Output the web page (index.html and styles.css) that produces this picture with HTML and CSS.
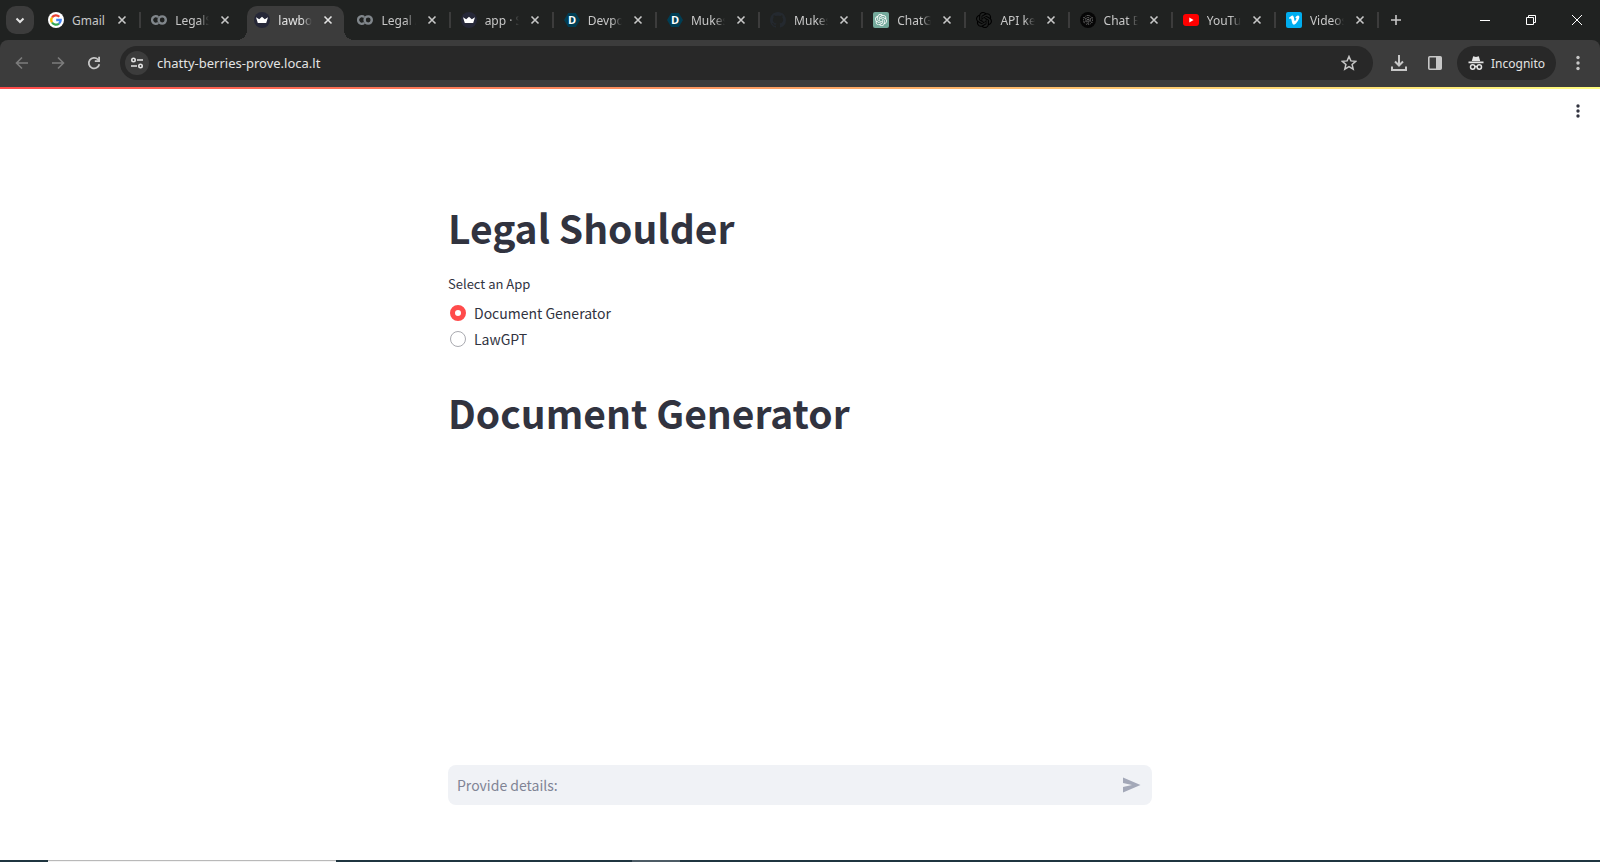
FILE: index.html
```html
<!DOCTYPE html>
<html lang="en">
<head>
  <meta charset="UTF-8">
  <meta name="viewport" content="width=device-width, initial-scale=1.0">
  <title>lawbot</title>
  <link rel="stylesheet" href="styles.css">
</head>
<body>
  <!-- shared icons -->
  <svg class="defs" aria-hidden="true">
    <symbol id="close" viewBox="0 0 16 16"><path d="M4.5 4.5l7 7M11.500 4.500l-7 7" fill="none" stroke="currentColor" stroke-width="1.6"/></symbol>
    <symbol id="colab" viewBox="0 0 16 16"><g fill="none" stroke="#80868b" stroke-width="2.4"><path d="M7.200 5.200A3.700 3.700 0 1 0 7.200 10.800"/><circle cx="11.200" cy="8" r="3.600"/></g></symbol>
    <symbol id="crown" viewBox="0 0 16 16"><circle cx="8" cy="8" r="8" fill="#262838"/><path d="M2 5.200L5.200 7.200 8 4.800 10.800 7.200 14 5.200 12.200 11H3.800z" fill="#fff"/></symbol>
    <symbol id="devpost" viewBox="0 0 16 16"><path d="M4.200 1h7.600L16 8l-4.200 7H4.200L0 8z" fill="#003e54"/><text x="8" y="12" text-anchor="middle" class="devpost-d">D</text></symbol>
    <symbol id="openai" viewBox="0 0 24 24"><path fill="currentColor" d="M22.2819 9.8211a5.9847 5.9847 0 0 0-.5157-4.9108 6.0462 6.0462 0 0 0-6.5098-2.9A6.0651 6.0651 0 0 0 4.9807 4.1818a5.9847 5.9847 0 0 0-3.9977 2.9 6.0462 6.0462 0 0 0 .7427 7.0966 5.98 5.98 0 0 0 .511 4.9107 6.051 6.051 0 0 0 6.5146 2.9001A5.9847 5.9847 0 0 0 13.2599 24a6.0557 6.0557 0 0 0 5.7718-4.2058 5.9894 5.9894 0 0 0 3.9977-2.9001 6.0557 6.0557 0 0 0-.7475-7.0729zm-9.022 12.6081a4.4755 4.4755 0 0 1-2.8764-1.0408l.1419-.0804 4.7783-2.7582a.7948.7948 0 0 0 .3927-.6813v-6.7369l2.02 1.1686a.071.071 0 0 1 .038.052v5.5826a4.504 4.504 0 0 1-4.4945 4.4944zm-9.6607-4.1254a4.4708 4.4708 0 0 1-.5346-3.0137l.142.0852 4.783 2.7582a.7712.7712 0 0 0 .7806 0l5.8428-3.3685v2.3324a.0804.0804 0 0 1-.0332.0615L9.74 19.9502a4.4992 4.4992 0 0 1-6.1408-1.6464zM2.3408 7.8956a4.485 4.485 0 0 1 2.3655-1.9728V11.6a.7664.7664 0 0 0 .3879.6765l5.8144 3.3543-2.0201 1.1685a.0757.0757 0 0 1-.071 0l-4.8303-2.7865A4.504 4.504 0 0 1 2.3408 7.872zm16.5963 3.8558L13.1038 8.364 15.1192 7.2a.0757.0757 0 0 1 .071 0l4.8303 2.7913a4.4944 4.4944 0 0 1-.6765 8.1042v-5.6772a.79.79 0 0 0-.407-.667zm2.0107-3.0231l-.142-.0852-4.7735-2.7818a.7759.7759 0 0 0-.7854 0L9.409 9.2297V6.8974a.0662.0662 0 0 1 .0284-.0615l4.8303-2.7866a4.4992 4.4992 0 0 1 6.6802 4.66zM8.3065 12.863l-2.02-1.1638a.0804.0804 0 0 1-.038-.0567V6.0742a4.4992 4.4992 0 0 1 7.3757-3.4537l-.142.0805L8.704 5.459a.7948.7948 0 0 0-.3927.6813zm1.0976-2.3654l2.602-1.4998 2.6069 1.4998v2.9994l-2.5974 1.4997-2.6067-1.4997Z"/></symbol>
  </svg>

  <header class="browser">
    <div class="tab-strip">
      <button class="tab-search" aria-label="Search tabs">
        <svg class="icon" viewBox="0 0 16 16"><path d="M4.500 6.500L8 10l3.500-3.500" fill="none" stroke="#e3e3e3" stroke-width="2"/></svg>
      </button>
      <div class="tabs" role="tablist">
        <div class="tab" role="tab">
          <svg class="icon" viewBox="0 0 16 16"><circle cx="8" cy="8" r="8" fill="#fff"/><g fill="none" stroke-width="2.300"><path d="M4 5.500A4.700 4.700 0 0 1 11.300 4.700" stroke="#ea4335"/><path d="M4 5.500A4.700 4.700 0 0 0 4 10.500" stroke="#fbbc05"/><path d="M4 10.500A4.700 4.700 0 0 0 11 11.600" stroke="#34a853"/><path d="M11 11.600A4.700 4.700 0 0 0 12.700 8H8.200" stroke="#4285f4"/></g></svg>
          <span class="tab-title">Gmail</span>
          <button class="tab-close" aria-label="Close tab"><svg class="icon"><use href="#close"/></svg></button>
        </div>
        <div class="tab before-active" role="tab">
          <svg class="icon"><use href="#colab"/></svg>
          <span class="tab-title">LegalS</span>
          <button class="tab-close" aria-label="Close tab"><svg class="icon"><use href="#close"/></svg></button>
        </div>
        <div class="tab active" role="tab" aria-selected="true">
          <svg class="icon"><use href="#crown"/></svg>
          <span class="tab-title">lawbo</span>
          <button class="tab-close" aria-label="Close tab"><svg class="icon"><use href="#close"/></svg></button>
        </div>
        <div class="tab" role="tab">
          <svg class="icon"><use href="#colab"/></svg>
          <span class="tab-title">Legal A</span>
          <button class="tab-close" aria-label="Close tab"><svg class="icon"><use href="#close"/></svg></button>
        </div>
        <div class="tab" role="tab">
          <svg class="icon"><use href="#crown"/></svg>
          <span class="tab-title">app · S</span>
          <button class="tab-close" aria-label="Close tab"><svg class="icon"><use href="#close"/></svg></button>
        </div>
        <div class="tab" role="tab">
          <svg class="icon"><use href="#devpost"/></svg>
          <span class="tab-title">Devpo</span>
          <button class="tab-close" aria-label="Close tab"><svg class="icon"><use href="#close"/></svg></button>
        </div>
        <div class="tab" role="tab">
          <svg class="icon"><use href="#devpost"/></svg>
          <span class="tab-title">Mukes</span>
          <button class="tab-close" aria-label="Close tab"><svg class="icon"><use href="#close"/></svg></button>
        </div>
        <div class="tab" role="tab">
          <svg class="icon" viewBox="0 0 16 16"><path fill="#24292f" d="M8 0C3.580 0 0 3.580 0 8c0 3.540 2.290 6.530 5.470 7.590.4.070.55-.17.55-.38 0-.19-.01-.82-.01-1.490-2.010.37-2.530-.49-2.690-.94-.09-.23-.48-.94-.82-1.130-.28-.15-.68-.52-.01-.53.63-.01 1.080.58 1.230.82.72 1.210 1.870.87 2.330.66.07-.52.28-.87.51-1.070-1.780-.2-3.640-.89-3.640-3.950 0-.87.31-1.590.82-2.150-.08-.2-.36-1.020.08-2.120 0 0 .67-.21 2.200.82.64-.18 1.320-.27 2-.27s1.360.09 2 .27c1.530-1.040 2.200-.82 2.200-.82.44 1.100.16 1.920.08 2.120.51.56.82 1.270.82 2.150 0 3.070-1.870 3.750-3.650 3.950.29.25.54.73.54 1.480 0 1.070-.01 1.930-.01 2.200 0 .21.15.46.55.38A8.010 8.010 0 0 0 16 8c0-4.420-3.580-8-8-8z"/></svg>
          <span class="tab-title">Mukes</span>
          <button class="tab-close" aria-label="Close tab"><svg class="icon"><use href="#close"/></svg></button>
        </div>
        <div class="tab" role="tab">
          <svg class="icon chatgpt" viewBox="0 0 16 16"><rect width="16" height="16" rx="2" fill="#74aa9c"/><use href="#openai" x="2" y="2" width="12" height="12"/></svg>
          <span class="tab-title">ChatG</span>
          <button class="tab-close" aria-label="Close tab"><svg class="icon"><use href="#close"/></svg></button>
        </div>
        <div class="tab" role="tab">
          <svg class="icon openai"><use href="#openai"/></svg>
          <span class="tab-title">API ke</span>
          <button class="tab-close" aria-label="Close tab"><svg class="icon"><use href="#close"/></svg></button>
        </div>
        <div class="tab" role="tab">
          <svg class="icon" viewBox="0 0 16 16"><circle cx="8" cy="8" r="8" fill="#060606"/><g fill="none" stroke="#757575" stroke-dasharray="1 1"><circle cx="8" cy="8" r="4.500"/><circle cx="8" cy="8" r="2.300"/><path d="M8 3v10M3.500 5.500l9 5M12.500 5.500l-9 5"/></g></svg>
          <span class="tab-title">Chat B</span>
          <button class="tab-close" aria-label="Close tab"><svg class="icon"><use href="#close"/></svg></button>
        </div>
        <div class="tab" role="tab">
          <svg class="icon" viewBox="0 0 16 16"><rect y="2" width="16" height="12" rx="3" fill="#f00"/><path d="M6.300 5.500v5L10.600 8z" fill="#fff"/></svg>
          <span class="tab-title">YouTu</span>
          <button class="tab-close" aria-label="Close tab"><svg class="icon"><use href="#close"/></svg></button>
        </div>
        <div class="tab" role="tab">
          <svg class="icon" viewBox="0 0 16 16"><rect width="16" height="16" rx="2" fill="#00adef"/><path d="M3 5.700C4.500 4.400 5.600 3.400 6.400 3.400c2 0 1.500 5.600 2.500 5.600.6 0 1.700-2 1.500-2.700-.2-.5-.7-.4-1.100-.2.500-1.700 1.500-2.700 2.700-2.700 1 0 1.500.7 1.300 2-.4 2.700-3.700 7.200-5.500 7.200-2.100 0-2-6-3-6.200-.3 0-.9.400-1.200.6z" fill="#fff"/></svg>
          <span class="tab-title">Videos</span>
          <button class="tab-close" aria-label="Close tab"><svg class="icon"><use href="#close"/></svg></button>
        </div>
      </div>
      <button class="new-tab" aria-label="New tab">
        <svg class="icon" viewBox="0 0 16 16"><path d="M8 3v10M3 8h10" stroke="#c7c7c7" stroke-width="1.600"/></svg>
      </button>
      <div class="window-buttons">
        <button aria-label="Minimize"><svg class="icon" viewBox="0 0 16 16"><path d="M3 8.500h10" stroke="#fff"/></svg></button>
        <button aria-label="Restore"><svg class="icon" viewBox="0 0 16 16"><path d="M3.500 5.500h7v7h-7zM5.500 5.500v-2h7v7h-2" fill="none" stroke="#fff"/></svg></button>
        <button aria-label="Close"><svg class="icon" viewBox="0 0 16 16"><path d="M3 3l10 10M13 3L3 13" stroke="#fff"/></svg></button>
      </div>
    </div>

    <div class="toolbar">
      <button class="nav-btn disabled" aria-label="Back"><svg class="icon" viewBox="0 0 16 16"><path d="M14 8H3M8 2.500L2.500 8 8 13.500" fill="none" stroke="currentColor" stroke-width="1.600"/></svg></button>
      <button class="nav-btn disabled" aria-label="Forward"><svg class="icon" viewBox="0 0 16 16"><path d="M2 8h11M8 2.500L13.500 8 8 13.500" fill="none" stroke="currentColor" stroke-width="1.600"/></svg></button>
      <button class="nav-btn" aria-label="Reload"><svg class="icon" viewBox="0 0 16 16"><path d="M13.300 9.200A5.300 5.300 0 1 1 12 4.500L13.300 6" fill="none" stroke="currentColor" stroke-width="1.800"/><path d="M14 1.800V7H8.800V5.300h3.400V1.800z" fill="currentColor"/></svg></button>
      <div class="omnibox">
        <button class="site-info" aria-label="View site information"><svg class="icon" viewBox="0 0 16 16"><g fill="none" stroke="#e3e3e3" stroke-width="1.600"><circle cx="4.500" cy="5" r="1.700"/><path d="M8 5h6M2 11h6"/><circle cx="11.500" cy="11" r="1.700"/></g></svg></button>
        <input class="url" type="text" value="chatty-berries-prove.loca.lt" aria-label="Address" spellcheck="false">
        <button class="nav-btn star" aria-label="Bookmark this tab"><svg class="icon" viewBox="0 0 16 16"><path d="M8 1.500l1.900 4.400 4.800.4-3.600 3.200 1.100 4.700L8 11.700l-4.200 2.500 1.100-4.700L1.300 6.300l4.800-.4z" fill="none" stroke="currentColor" stroke-width="1.500"/></svg></button>
      </div>
      <button class="nav-btn" aria-label="Downloads"><svg class="icon" viewBox="0 0 16 16"><path d="M8 0v10M4 6.500l4 4 4-4M1 11.500V15h14v-3.500" fill="none" stroke="currentColor" stroke-width="2"/></svg></button>
      <button class="nav-btn" aria-label="Side panel"><svg class="icon" viewBox="0 0 16 16"><rect x="1.800" y="1.800" width="12.400" height="12.400" rx="1" fill="none" stroke="currentColor" stroke-width="1.600"/><path d="M9 2h5v12H9z" fill="currentColor"/></svg></button>
      <button class="incognito"><svg class="icon" viewBox="0 0 16 16"><path d="M5.200 1.200L8 2l2.800-.8L12.200 6H3.800zM.5 6.500h15v1.700H.5z" fill="#e3e3e3"/><g fill="none" stroke="#e3e3e3" stroke-width="1.500"><circle cx="4.700" cy="12" r="2.200"/><circle cx="11.300" cy="12" r="2.200"/><path d="M6.800 11.500h2.400"/></g></svg>Incognito</button>
      <button class="nav-btn" aria-label="Menu"><svg class="icon" viewBox="0 0 16 16"><g fill="currentColor"><circle cx="8" cy="2.500" r="1.700"/><circle cx="8" cy="8" r="1.700"/><circle cx="8" cy="13.500" r="1.700"/></g></svg></button>
    </div>
  </header>

  <div class="app">
    <div class="decoration"></div>
    <button class="app-menu" aria-label="App menu"><svg class="icon" viewBox="0 0 16 16"><circle cx="8" cy="3" r="1.700"/><circle cx="8" cy="8" r="1.700"/><circle cx="8" cy="13" r="1.700"/></svg></button>

    <main class="block">
      <h1>Legal Shoulder</h1>
      <fieldset class="radio-group">
        <legend>Select an App</legend>
        <label class="radio"><input type="radio" name="app" checked> Document Generator</label>
        <label class="radio"><input type="radio" name="app"> LawGPT</label>
      </fieldset>
      <h1>Document Generator</h1>
    </main>

    <form class="chat">
      <div class="chat-box">
        <input type="text" placeholder="Provide details:" aria-label="Provide details:">
        <button type="button" aria-label="Send"><svg viewBox="0 0 20 20"><path d="M1 2.500L18.500 10 1 17.500V12L10 10 1 8z" fill="currentColor"/></svg></button>
      </div>
    </form>
  </div>

  <footer class="taskbar"><span class="task-open"></span><span class="task-idle"></span></footer>
</body>
</html>
```

FILE: styles.css
```css
* {
  box-sizing: border-box;
}
body {
  margin: 0;
  min-height: 100vh;
  display: flex;
  flex-direction: column;
  background: #fff;
  font-family: "Noto Sans CJK SC", "Noto Sans", sans-serif;
  color: #31333f;
}
button {
  display: flex;
  align-items: center;
  justify-content: center;
  border: none;
  background: none;
  padding: 0;
  font: inherit;
  cursor: pointer;
}
.defs {
  position: absolute;
  width: 0;
  height: 0;
}
.icon {
  display: block;
  flex: none;
  width: 16px;
  height: 16px;
}

/* browser window */
.browser {
  background: #202221;
  font-family: "Noto Sans", sans-serif;
  font-size: 12px;
  color: #c7c7c7;
}
.tab-strip {
  display: flex;
  align-items: center;
  height: 40px;
  padding-left: 6px;
}
.tab-search {
  flex: none;
  width: 28px;
  height: 28px;
  margin-right: 3px;
  border-radius: 10px;
  background: #3c3c3c;
}
.tabs {
  display: flex;
  flex: 0 1 1341px;
  min-width: 0;
  height: 40px;
}
.tab {
  position: relative;
  display: flex;
  flex: 1 1 0;
  align-items: center;
  gap: 8px;
  min-width: 0;
  padding: 0 10px 0 11px;
}
.tab::after {
  content: "";
  position: absolute;
  right: -1px;
  top: 12px;
  width: 2px;
  height: 16px;
  background: #3c3c3c;
}
.tab.before-active::after {
  display: none;
}
.tab.active {
  color: #e3e3e3;
  z-index: 0;
}
.tab.active::before {
  content: "";
  position: absolute;
  z-index: -1;
  inset: 6px 2px 0 4px;
  border-radius: 10px 10px 0 0;
  background: #3c3c3c;
}
.tab.active::after {
  z-index: -1;
  inset: 30px -8px 0 -6px;
  width: auto;
  height: 10px;
  background:
    radial-gradient(circle at 0 0, transparent 10px, #3c3c3c 10px) left / 10px 10px no-repeat,
    radial-gradient(circle at 100% 0, transparent 10px, #3c3c3c 10px) right / 10px 10px no-repeat;
}
.tab-title {
  flex: 1;
  min-width: 0;
  overflow: hidden;
  white-space: nowrap;
  line-height: 16px;
  padding-top: 1px;
  -webkit-mask-image: linear-gradient(to right, #000 70%, transparent);
  mask-image: linear-gradient(to right, #000 70%, transparent);
}
.tab:first-child .tab-title {
  -webkit-mask-image: none;
  mask-image: none;
}
.tab-close {
  color: inherit;
}
.devpost-d {
  font: bold 11px "Open Sans", sans-serif;
  fill: #fff;
}
.chatgpt {
  color: #fff;
}
.openai {
  color: #000;
}
.new-tab {
  flex: none;
  width: 36px;
  height: 28px;
}
.window-buttons {
  display: flex;
  margin-left: auto;
}
.window-buttons button {
  width: 46px;
  height: 40px;
}
.toolbar {
  display: flex;
  align-items: center;
  height: 47px;
  padding: 0 4px 1px;
  border-radius: 8px 8px 0 0;
  background: #3c3c3c;
}
.nav-btn {
  flex: none;
  width: 36px;
  height: 34px;
  color: #c7c7c7;
}
.nav-btn.disabled {
  color: #7c7c7c;
}
.omnibox {
  display: flex;
  flex: 1;
  align-items: center;
  height: 34px;
  margin: 0 8px;
  padding: 0 6px 0 5px;
  border-radius: 17px;
  background: #282828;
}
.site-info {
  flex: none;
  width: 24px;
  height: 24px;
  border-radius: 50%;
  background: #3c3c3c;
}
.url {
  flex: 1;
  min-width: 0;
  margin-left: 8px;
  padding: 0;
  border: none;
  outline: none;
  background: none;
  color: #e3e3e3;
  font: 13px "Noto Sans", sans-serif;
}
.incognito {
  gap: 7px;
  height: 34px;
  margin: 0 4px;
  padding: 0 11px;
  border-radius: 17px;
  background: #282828;
  color: #e3e3e3;
}

/* page */
.app {
  position: relative;
  display: flex;
  flex: 1;
  flex-direction: column;
}
.decoration {
  height: 2px;
  background: linear-gradient(90deg, #ff4b4b, #fffd80);
}
.app-menu {
  position: absolute;
  top: 16px;
  right: 14px;
}
.app-menu svg {
  fill: #31333f;
}
.block,
.chat {
  width: 100%;
  max-width: 736px;
  margin: 0 auto;
  padding: 0 16px;
}
.block {
  flex: 1;
  padding-top: 94px;
}
h1 {
  margin: 0;
  padding: 18px 0;
  font-size: 39px;
  font-weight: 700;
  line-height: 53px;
}
.radio-group {
  margin: 0 0 16px;
  padding: 0;
  border: none;
}
.radio-group legend {
  padding: 0;
  margin-bottom: 4px;
  font-size: 13px;
  line-height: 24px;
}
.radio {
  display: flex;
  align-items: center;
  gap: 8px;
  padding-left: 2px;
  font-size: 14px;
  line-height: 26px;
}
.radio input {
  appearance: none;
  width: 16px;
  height: 16px;
  margin: 0;
  border: 1px solid #a9aab0;
  border-radius: 50%;
  background: #fff;
}
.radio input:checked {
  border: 5px solid #ff4b4b;
}
.chat {
  padding-bottom: 55px;
}
.chat-box {
  display: flex;
  align-items: center;
  height: 40px;
  padding: 0 10px 0 9px;
  border-radius: 8px;
  background: #f0f2f6;
}
.chat-box input {
  flex: 1;
  min-width: 0;
  padding: 0;
  border: none;
  outline: none;
  background: none;
  color: #31333f;
  font: 14px "Noto Sans CJK SC", sans-serif;
}
.chat-box input::placeholder {
  color: #808495;
}
.chat-box button {
  color: #a3a8b8;
}
.chat-box svg {
  width: 20px;
  height: 20px;
}

/* top edge of the taskbar */
.taskbar {
  display: flex;
  height: 2px;
  padding-left: 3%;
  background: #1f3540;
}
.task-open {
  width: 288px;
  border-top: 1px solid #b9b9b9;
  background: #f3f3f3;
}
.task-idle {
  width: 48px;
  margin-left: 296px;
  background: #4d5c66;
}
```
